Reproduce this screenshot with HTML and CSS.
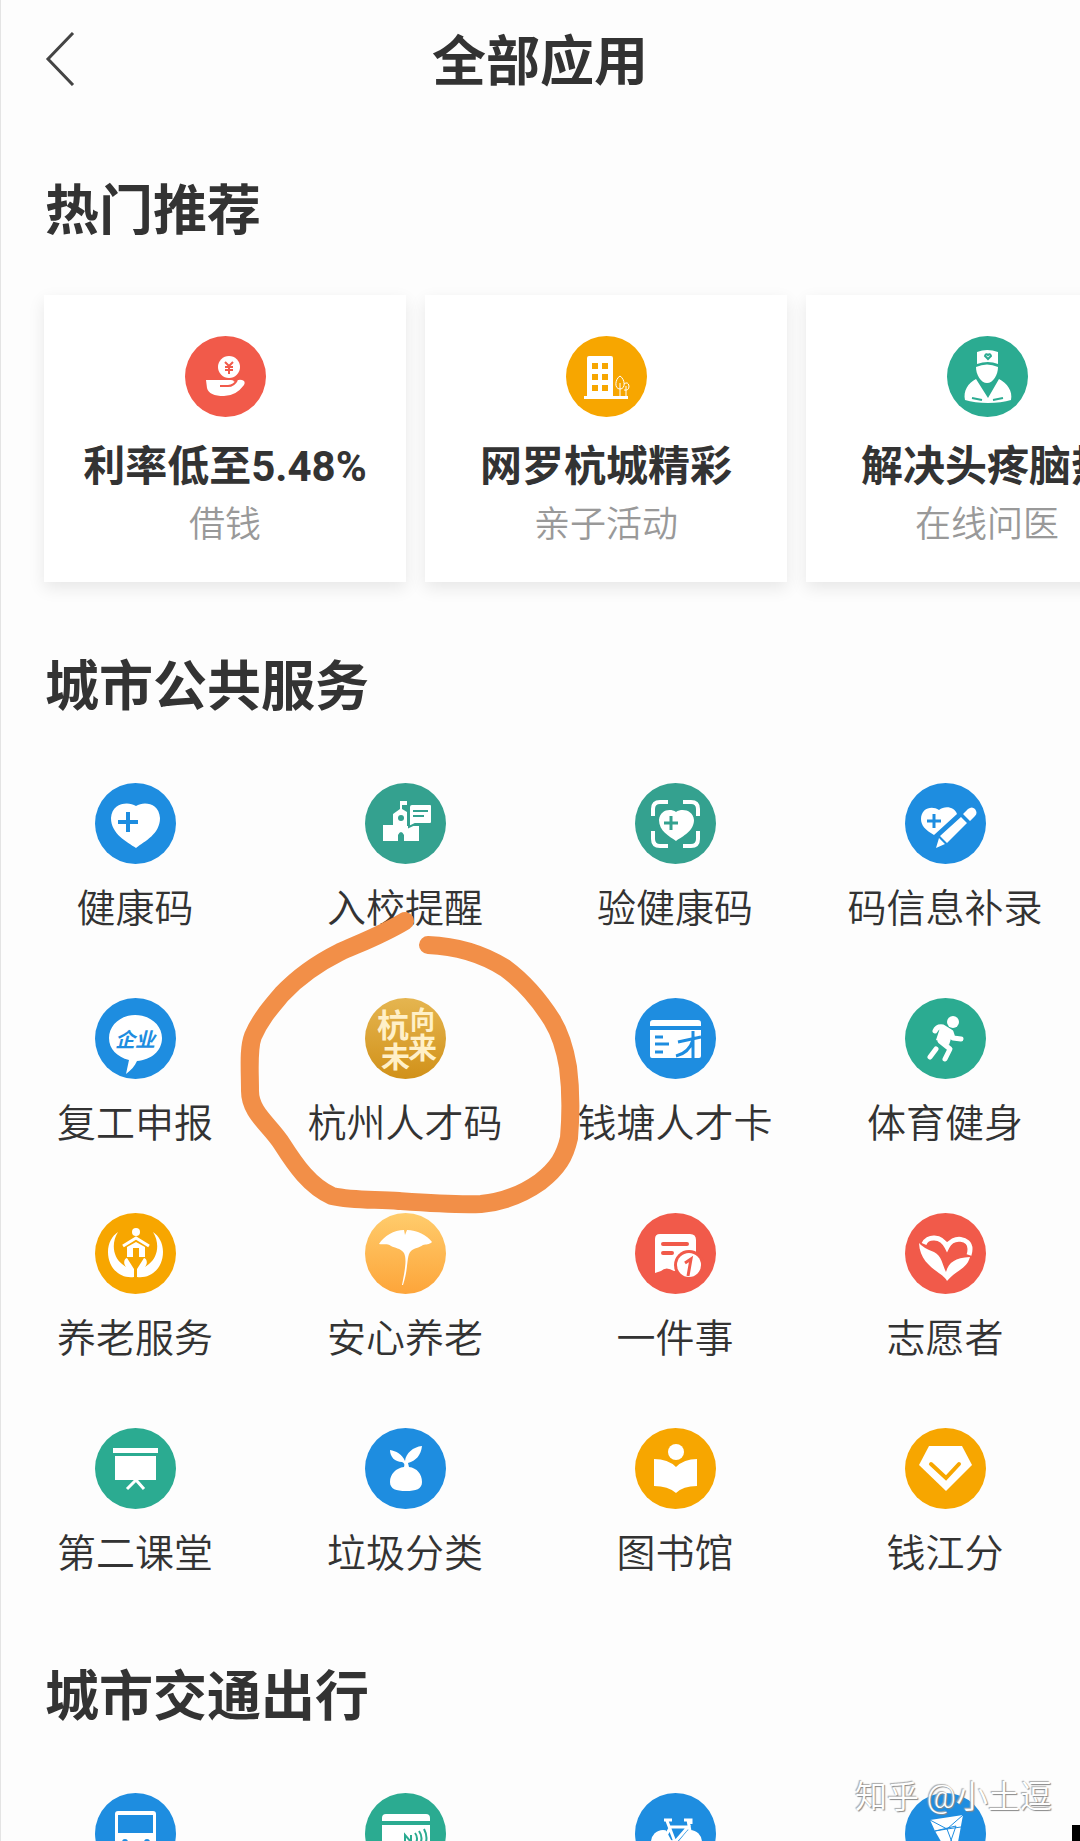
FILE: index.html
```
<!DOCTYPE html>
<html lang="zh-CN">
<head>
  <meta charset="UTF-8" />
  <meta name="viewport" content="width=device-width, initial-scale=1.0"/>
  <title>全部应用</title>
  <link rel="stylesheet" href="styles.css">
</head>
<body>

  <div class="page">
    <header class="header">
      <button class="back-btn" type="button">
        <svg viewBox="0 0 30 54"><path d="M28 1L3 27l25 26"/></svg>
      </button>
      <h1>全部应用</h1>
    </header>

    <main>
      <!-- Hot picks -->
      <section class="section">
        <h2>热门推荐</h2>
        <div class="card-row">
          <a href="#" class="card">
            <svg class="icon red" viewBox="0 0 81 81">
              <circle class="bg" cx="50%" cy="50%" r="50%"/>
              <circle cx="44" cy="31" r="11"/>
              <path class="cut" stroke-width="2" d="M40 26l4 4 4-4M44 30v8M40 31h8M40 34h8"/>
              <path d="M21 44h25q3 0 3 2 4-3 8-2 4 1 2 5-8 11-20 11-15 0-17-8z"/>
              <path class="cut" stroke-width="2" d="M35 50h8q6 0 9-6"/>
            </svg>
            <strong>利率低至5.48%</strong>
            <span>借钱</span>
          </a>
          <a href="#" class="card">
            <svg class="icon yellow" viewBox="0 0 81 81">
              <circle class="bg" cx="50%" cy="50%" r="50%"/>
              <path d="M23 20h22q2 0 2 2v38h15v3H18v-3h3V22q0-2 2-2z"/>
              <path class="hole" d="M26 27h6v6h-6zM36 27h6v6h-6zM26 38h6v6h-6zM36 38h6v6h-6zM26 49h6v6h-6zM36 49h6v6h-6z"/>
              <path class="line" stroke-width="1" d="M54 40c-5 3-6 13 0 13s5-10 0-13zM54 47v14M58 48q4-3 5 2 0 5-5 4M60 50v11"/>
            </svg>
            <strong>网罗杭城精彩</strong>
            <span>亲子活动</span>
          </a>
          <a href="#" class="card">
            <svg class="icon green" viewBox="0 0 81 81">
              <circle class="bg" cx="50%" cy="50%" r="50%"/>
              <path d="M30 16q10-4 21 0v12q-10-4-21 0z"/>
              <path d="M29 31q11-5 22 0c0 8-5 16-11 16s-11-8-11-16z"/>
              <path d="M29 43l12 19 11-19c8 4 14 12 12 21-12 4-34 4-46 0-2-9 3-17 11-21z"/>
              <path class="cut" stroke-width="2" d="M25 62l10 2M46 64l10-2M41 23l-3-3q1-3 3-1 2-2 3 1z"/>
            </svg>
            <strong>解决头疼脑热</strong>
            <span>在线问医</span>
          </a>
        </div>
      </section>

      <!-- City services -->
      <section class="section services">
        <h2>城市公共服务</h2>
        <ul class="grid">
          <li>
            <a href="#" class="app">
              <svg class="icon blue" viewBox="0 0 81 81">
                <circle class="bg" cx="50%" cy="50%" r="50%"/>
                <path d="M41 23c8-5 23-3 24 12 0 16-15 23-24 30-9-6-25-14-25-30 1-15 17-17 25-12z"/>
                <path class="cut" stroke-width="4" d="M23 39h20M33 29v20"/>
              </svg>
              <span>健康码</span>
            </a>
          </li>
          <li>
            <a href="#" class="app">
              <svg class="icon teal" viewBox="0 0 81 81">
                <circle class="bg" cx="50%" cy="50%" r="50%"/>
                <path d="M35 18h7v4h-5v4l5 3v14h12v15H39v-6q-3-6-6 0v6H18V42h10V31l7-5z"/>
                <circle class="hole" cx="36" cy="35" r="3"/>
                <path class="outlined" d="M47 21h18q2 0 2 2v16q0 2-2 2H50l-6 3V24q0-3 3-3z"/>
                <path class="cut" stroke-width="2" d="M48 28h15M48 33h11"/>
              </svg>
              <span>入校提醒</span>
            </a>
          </li>
          <li>
            <a href="#" class="app">
              <svg class="icon teal" viewBox="0 0 81 81">
                <circle class="bg" cx="50%" cy="50%" r="50%"/>
                <path class="line" stroke-width="4" d="M18 33v-7q0-7 7-7h8M48 19h8q7 0 7 7v7M63 48v8q0 7-7 7h-8M33 63h-8q-7 0-7-7v-8"/>
                <path d="M41 29c6-4 17-2 18 8 0 11-11 16-18 21-7-5-17-10-17-21 1-10 11-12 17-8z"/>
                <path class="cut" stroke-width="3" d="M29 40h14M36 33v14"/>
              </svg>
              <span>验健康码</span>
            </a>
          </li>
          <li>
            <a href="#" class="app">
              <svg class="icon blue" viewBox="0 0 81 81">
                <circle class="bg" cx="50%" cy="50%" r="50%"/>
                <path d="M34 27c6-5 16-3 18 4L29 52c-9-5-13-10-13-16 0-11 11-14 18-9z"/>
                <path class="cut" stroke-width="3" d="M22 38h14M29 31v14"/>
                <path d="M56 34l6 6-20 20-7-7zM34 55l6 6-9 4zM58 31l5-5q4-3 7 0 3 4 0 7l-5 5z"/>
              </svg>
              <span>码信息补录</span>
            </a>
          </li>
          <li>
            <a href="#" class="app">
              <svg class="icon blue" viewBox="0 0 81 81">
                <circle class="bg" cx="50%" cy="50%" r="50%"/>
                <path d="M40 17c15 0 27 10 27 23S56 62 42 63c-2 5-6 9-11 13l3-14C22 59 14 51 14 40c0-13 12-23 26-23z"/>
                <text class="hole company" x="40" y="49">企业</text>
              </svg>
              <span>复工申报</span>
            </a>
          </li>
          <li>
            <a href="#" class="app">
              <svg class="icon" viewBox="0 0 81 81">
                <linearGradient id="gold" x1="0" y1="0" x2="0" y2="1">
                  <stop offset="0" stop-color="#e5b550"/>
                  <stop offset="1" stop-color="#d19119"/>
                </linearGradient>
                <circle fill="url(#gold)" cx="50%" cy="50%" r="50%"/>
                <g class="slogan">
                  <text x="12" y="39" font-size="32">杭</text>
                  <text x="45" y="31" font-size="25">向</text>
                  <text x="16" y="70" font-size="29">未</text>
                  <text x="43" y="61" font-size="29">来</text>
                </g>
              </svg>
              <span>杭州人才码</span>
            </a>
            <!-- hand-drawn marker ring -->
            <svg class="marker" viewBox="0 0 360 320">
              <path d="M175 22C152 36 130 44 110 53 88 64 68 78 52 95 42 107 30 120 23 137 18 150 20 170 20 192c0 22 20 34 32 53 14 22 28 42 50 52 22 5 45 3 67 5 28 2 55 4 82 3 22-2 42-10 59-22 18-14 25-26 29-44 2-24 2-48-1-71-3-18-8-34-16-47-14-22-28-38-47-52-24-15-50-22-77-23"/>
            </svg>
          </li>
          <li>
            <a href="#" class="app">
              <svg class="icon blue" viewBox="0 0 81 81">
                <circle class="bg" cx="50%" cy="50%" r="50%"/>
                <path d="M18 22h45q3 0 3 3v3H15v-3q0-3 3-3zM15 32h51v26q0 2-2 2H17q-2 0-2-2z"/>
                <path class="cut" stroke-width="3" d="M20 39h8M20 46h14M20 54h8M43 44l23-5M58 33v27M58 42q-4 13-17 16"/>
              </svg>
              <span>钱塘人才卡</span>
            </a>
          </li>
          <li>
            <a href="#" class="app">
              <svg class="icon green" viewBox="0 0 81 81">
                <circle class="bg" cx="50%" cy="50%" r="50%"/>
                <circle cx="48" cy="24" r="6"/>
                <path d="M36 27l12 7-4 13-13-5z"/>
                <path class="line" stroke-width="5" stroke-linecap="round" stroke-linejoin="round" d="M30 33q2-5 8-4l8 5 2 6 8 1M35 43l10 8-5 10M31 51l-6 8"/>
              </svg>
              <span>体育健身</span>
            </a>
          </li>
          <li>
            <a href="#" class="app">
              <svg class="icon yellow" viewBox="0 0 81 81">
                <circle class="bg" cx="50%" cy="50%" r="50%"/>
                <circle cx="41" cy="19" r="4"/>
                <path class="line" stroke-width="3" d="M28 33l13-8 13 8"/>
                <path d="M32 34l9-5 9 5v10h-6v-9h-6v9h-6z"/>
                <path d="M23 19c-7 11-5 25 4 32l4 3c-3-4-2-8 1-9l7 11v8c-14 2-26-9-26-25 0-9 4-16 10-20zM58 19c7 11 5 25-4 32l-4 3c3-4 2-8-1-9l-7 11v8c14 2 26-9 26-25 0-9-4-16-10-20z"/>
              </svg>
              <span>养老服务</span>
            </a>
          </li>
          <li>
            <a href="#" class="app">
              <svg class="icon" viewBox="0 0 81 81">
                <linearGradient id="ginkgo" x1="0" y1="0" x2="0" y2="1">
                  <stop offset="0" stop-color="#ffcc6c"/>
                  <stop offset="1" stop-color="#fda53a"/>
                </linearGradient>
                <circle fill="url(#ginkgo)" cx="50%" cy="50%" r="50%"/>
                <path d="M14 31c5-8 15-14 25-14l1 5 2-5c10 0 20 5 25 12-3 3-6 2-9 3-4 3-9 3-12 6-5 5-2 16-8 34h-1c3-15 5-26 2-32-4-5-9-5-13-7-4-3-8-1-12-2z"/>
              </svg>
              <span>安心养老</span>
            </a>
          </li>
          <li>
            <a href="#" class="app">
              <svg class="icon red" viewBox="0 0 81 81">
                <circle class="bg" cx="50%" cy="50%" r="50%"/>
                <path d="M25 21h30q6 0 6 6v27l-22 4q-8-5-13 0l-6 2V26q0-5 5-5z"/>
                <path class="cut" stroke-width="4" stroke-linecap="round" d="M28 31h24M28 40h9"/>
                <circle class="hole" cx="54" cy="52" r="15"/>
                <circle cx="54" cy="52" r="12"/>
                <path class="cut" stroke-width="3" d="M50 50l6-4-3 17"/>
              </svg>
              <span>一件事</span>
            </a>
          </li>
          <li>
            <a href="#" class="app">
              <svg class="icon red" viewBox="0 0 81 81">
                <circle class="bg" cx="50%" cy="50%" r="50%"/>
                <path class="line" stroke-width="5" d="M19 31c3-8 17-9 23 3 6-12 23-9 23 2q0 3-1 6"/>
                <path d="M14 30q4 5 15 9c8 4 8 12 12 20 3-10 9-14 24-15-3 12-15 14-23 24C38 59 15 54 14 30z"/>
              </svg>
              <span>志愿者</span>
            </a>
          </li>
          <li>
            <a href="#" class="app">
              <svg class="icon green" viewBox="0 0 81 81">
                <circle class="bg" cx="50%" cy="50%" r="50%"/>
                <path d="M18 20h45v5H18zM20 28h41v24H20z"/>
                <path class="line" stroke-width="3" d="M32 61l9-9 8 9"/>
              </svg>
              <span>第二课堂</span>
            </a>
          </li>
          <li>
            <a href="#" class="app">
              <svg class="icon blue" viewBox="0 0 81 81">
                <circle class="bg" cx="50%" cy="50%" r="50%"/>
                <path d="M39 39c1-3 0-4-2-5-7 0-12-5-12-12 6 1 12 4 15 11 1-8 8-14 17-15-1 9-6 15-14 17l1 4c8 1 13 7 13 15 0 7-6 9-16 9s-16-2-16-9c0-8 6-14 14-15z"/>
              </svg>
              <span>垃圾分类</span>
            </a>
          </li>
          <li>
            <a href="#" class="app">
              <svg class="icon yellow" viewBox="0 0 81 81">
                <circle class="bg" cx="50%" cy="50%" r="50%"/>
                <circle cx="41" cy="24" r="8"/>
                <path d="M19 31q14 0 22 8 8-8 21-8v27q-14 0-21 7-8-7-22-7z"/>
              </svg>
              <span>图书馆</span>
            </a>
          </li>
          <li>
            <a href="#" class="app">
              <svg class="icon yellow" viewBox="0 0 81 81">
                <circle class="bg" cx="50%" cy="50%" r="50%"/>
                <path d="M24 18h33l10 19-26 26-27-26z"/>
                <path class="cut" stroke-width="4" stroke-linecap="round" d="M26 36l15 14 13-14"/>
              </svg>
              <span>钱江分</span>
            </a>
          </li>
        </ul>
      </section>

      <!-- Transport -->
      <section class="section transport">
        <h2>城市交通出行</h2>
        <ul class="grid">
          <li>
            <a href="#" class="app">
              <svg class="icon blue" viewBox="0 0 81 81">
                <circle class="bg" cx="50%" cy="50%" r="50%"/>
                <path d="M23 18h35q3 0 3 3v37H20V21q0-3 3-3z"/>
                <path class="hole" d="M23 22h35v18H23z"/>
                <circle class="hole" cx="30" cy="49" r="3"/>
                <circle class="hole" cx="52" cy="49" r="3"/>
              </svg>
            </a>
          </li>
          <li>
            <a href="#" class="app">
              <svg class="icon green" viewBox="0 0 81 81">
                <circle class="bg" cx="50%" cy="50%" r="50%"/>
                <path d="M21 21h40q4 0 4 4v3H17v-3q0-4 4-4zM17 32h48v28H17z"/>
                <path class="cut" stroke-width="2" d="M40 49v-7l6 7v-7M50 40q4 5 0 12M54 38q5 7 0 15M59 36q5 9 0 18"/>
              </svg>
            </a>
          </li>
          <li>
            <a href="#" class="app">
              <svg class="icon blue" viewBox="0 0 81 81">
                <circle class="bg" cx="50%" cy="50%" r="50%"/>
                <circle cx="28" cy="49" r="12"/>
                <circle cx="55" cy="49" r="12"/>
                <path class="cut" stroke-width="6" d="M31 31l9 17 14-17"/>
                <path class="line" stroke-width="3" d="M29 27h8M49 27h7v4M32 28l8 21M53 27l4 22M34 34h19L40 49 28 48l7-13"/>
              </svg>
            </a>
          </li>
          <li>
            <a href="#" class="app">
              <svg class="icon blue" viewBox="0 0 81 81">
                <circle class="bg" cx="50%" cy="50%" r="50%"/>
                <path d="M25 27l33-5-7 38-9-1-12-21z"/>
                <path class="cut" stroke-width="1" d="M25 27l17 9 16-14M30 38l12-2 14-2M30 38l21-5-9 26M42 36l9 24"/>
              </svg>
            </a>
          </li>
        </ul>
      </section>
    </main>

    <div class="watermark">知乎 @小土逗</div>
    <div class="corner"></div>
  </div>

</body>
</html>
```
FILE: styles.css
```
* {
  margin: 0;
  padding: 0;
  box-sizing: border-box;
}

body {
  font-family: Roboto, "Noto Sans CJK SC", sans-serif;
  background: #fdfdfd;
  color: #333;
}

a {
  color: inherit;
  text-decoration: none;
}

ul {
  list-style: none;
}

.page {
  position: relative;
  height: 100vh;
  overflow: hidden;
  box-shadow: inset 1px 0 #e4e4e4;
}

.header {
  position: relative;
  display: flex;
  justify-content: center;
  align-items: center;
  height: 126px;
}

.back-btn {
  position: absolute;
  left: 45px;
  top: 32px;
  width: 30px;
  height: 54px;
  border: none;
  background: none;
  cursor: pointer;
}

.back-btn svg {
  display: block;
  fill: none;
  stroke: #444;
  stroke-width: 3;
}

h1, h2 {
  font-size: 54px;
  line-height: 60px;
  font-weight: bold;
}

h2 {
  padding: 0 45px;
}

.section {
  padding-top: 56px;
}

.services {
  padding-top: 36px;
}

.transport {
  padding-top: 89px;
}

/* Cards run off the right edge */
.card-row {
  display: flex;
  gap: 19px;
  padding: 53px 44px 40px;
  overflow: hidden;
}

.card {
  display: flex;
  flex-direction: column;
  flex: 0 0 362px;
  align-items: center;
  padding: 41px 0 35px;
  background: #fff;
  box-shadow: 0 6px 16px rgba(0, 0, 0, 0.09);
  white-space: nowrap;
}

.card strong {
  margin-top: 22px;
  font-size: 42px;
  line-height: 56px;
}

.card span {
  margin-top: 8px;
  font-size: 36px;
  line-height: 44px;
  font-weight: 350;
  color: #999;
}

.grid {
  display: grid;
  grid-template-columns: repeat(4, 1fr);
  row-gap: 64px;
  padding-top: 65px;
}

.grid li {
  position: relative;
}

.app {
  display: flex;
  flex-direction: column;
  align-items: center;
  gap: 20px;
  font-size: 39px;
  line-height: 50px;
  font-weight: 350;
  white-space: nowrap;
}

/* Icons */
.icon {
  flex-shrink: 0;
  width: 81px;
  height: 81px;
  fill: #fff;
}

.blue { color: #1e8de0; }
.green { color: #2bab91; }
.teal { color: #34a18f; }
.red { color: #f15a4a; }
.yellow { color: #f7a600; }

.bg, .hole {
  fill: currentColor;
}

.cut {
  fill: none;
  stroke: currentColor;
}

.line {
  fill: none;
  stroke: #fff;
}

.outlined {
  stroke: currentColor;
  stroke-width: 2;
}

.company {
  font-size: 20px;
  font-style: italic;
  font-weight: bold;
  text-anchor: middle;
}

.slogan {
  fill: #fff0c8;
  font-weight: bold;
}

.marker {
  position: absolute;
  left: 50%;
  top: -99px;
  width: 360px;
  height: 320px;
  margin-left: -175px;
  fill: none;
  stroke: #f28f48;
  stroke-width: 18;
  stroke-linecap: round;
  stroke-linejoin: round;
  pointer-events: none;
}

.watermark {
  position: absolute;
  right: 28px;
  bottom: 22px;
  font-size: 32px;
  line-height: 44px;
  font-weight: 350;
  color: #fff;
  text-shadow: 1px 1px 1px #888, -1px -1px 1px #aaa;
}

.corner {
  position: absolute;
  right: 0;
  bottom: 0;
  width: 8px;
  height: 16px;
  background: #000;
}
```
